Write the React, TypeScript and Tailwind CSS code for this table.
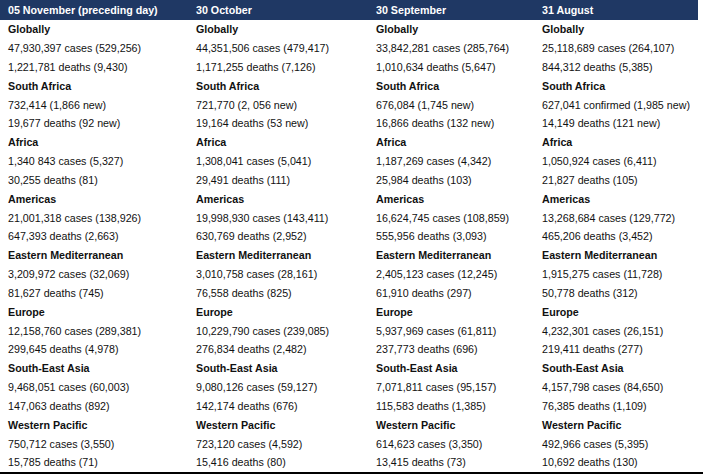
import React from "react";

type Cell = { t: string; b?: boolean };

const headers = ["05 November (preceding day)", "30 October", "30 September", "31 August"];

const cols: string[][] = [
  [
    "*Globally", "47,930,397 cases (529,256)", "1,221,781 deaths (9,430)",
    "*South Africa", "732,414 (1,866 new)", "19,677 deaths (92 new)",
    "*Africa", "1,340 843 cases (5,327)", "30,255 deaths (81)",
    "*Americas", "21,001,318 cases (138,926)", "647,393 deaths (2,663)",
    "*Eastern Mediterranean", "3,209,972 cases (32,069)", "81,627 deaths (745)",
    "*Europe", "12,158,760 cases (289,381)", "299,645 deaths (4,978)",
    "*South-East Asia", "9,468,051 cases (60,003)", "147,063 deaths (892)",
    "*Western Pacific", "750,712 cases (3,550)", "15,785 deaths (71)",
  ],
  [
    "*Globally", "44,351,506 cases (479,417)", "1,171,255 deaths (7,126)",
    "*South Africa", "721,770 (2, 056 new)", "19,164 deaths (53 new)",
    "*Africa", "1,308,041 cases (5,041)", "29,491 deaths (111)",
    "*Americas", "19,998,930 cases (143,411)", "630,769 deaths (2,952)",
    "*Eastern Mediterranean", "3,010,758 cases (28,161)", "76,558 deaths (825)",
    "*Europe", "10,229,790 cases (239,085)", "276,834 deaths (2,482)",
    "*South-East Asia", "9,080,126 cases (59,127)", "142,174 deaths (676)",
    "*Western Pacific", "723,120 cases (4,592)", "15,416 deaths (80)",
  ],
  [
    "*Globally", "33,842,281 cases (285,764)", "1,010,634 deaths (5,647)",
    "*South Africa", "676,084 (1,745 new)", "16,866 deaths (132 new)",
    "*Africa", "1,187,269 cases (4,342)", "25,984 deaths (103)",
    "*Americas", "16,624,745 cases (108,859)", "555,956 deaths (3,093)",
    "*Eastern Mediterranean", "2,405,123 cases (12,245)", "61,910 deaths (297)",
    "*Europe", "5,937,969 cases (61,811)", "237,773 deaths (696)",
    "*South-East Asia", "7,071,811 cases (95,157)", "115,583 deaths (1,385)",
    "*Western Pacific", "614,623 cases (3,350)", "13,415 deaths (73)",
  ],
  [
    "*Globally", "25,118,689 cases (264,107)", "844,312 deaths (5,385)",
    "*South Africa", "627,041 confirmed (1,985 new)", "14,149 deaths (121 new)",
    "*Africa", "1,050,924 cases (6,411)", "21,827 deaths (105)",
    "*Americas", "13,268,684 cases (129,772)", "465,206 deaths (3,452)",
    "*Eastern Mediterranean", "1,915,275 cases (11,728)", "50,778 deaths (312)",
    "*Europe", "4,232,301 cases (26,151)", "219,411 deaths (277)",
    "*South-East Asia", "4,157,798 cases (84,650)", "76,385 deaths (1,109)",
    "*Western Pacific", "492,966 cases (5,395)", "10,692 deaths (130)",
  ],
];

const colPad = ["pl-[8px]", "pl-[7px]", "pl-[7px]", "pl-[7px]"];

export default function App() {
  const rows: Cell[][] = [];
  for (let r = 0; r < 24; r++) {
    rows.push(
      cols.map((c) => {
        const s = c[r];
        return s.startsWith("*") ? { t: s.slice(1), b: true } : { t: s };
      })
    );
  }
  return (
    <div
      className="w-[705px] h-[476px] bg-white text-[#111] text-[10.7px] leading-none"
      style={{ fontFamily: '"Liberation Sans", Arial, sans-serif' }}
    >
      <div className="w-[698px] h-[20px] bg-[#1f3864] text-white font-bold grid grid-cols-[189px_180px_166px_163px] items-center">
        {headers.map((h, i) => (
          <div key={i} className={`${colPad[i]} whitespace-nowrap`}>
            {h}
          </div>
        ))}
      </div>
      <div className="w-[703px] border-b-2 border-black">
        {rows.map((row, r) => (
          <div key={r} className="h-[18.83px] pt-[0.5px] grid grid-cols-[189px_180px_166px_168px] items-center">
            {row.map((c, i) => (
              <div key={i} className={`${colPad[i]} whitespace-nowrap ${c.b ? "font-bold" : ""}`}>
                {c.t}
              </div>
            ))}
          </div>
        ))}
      </div>
    </div>
  );
}
